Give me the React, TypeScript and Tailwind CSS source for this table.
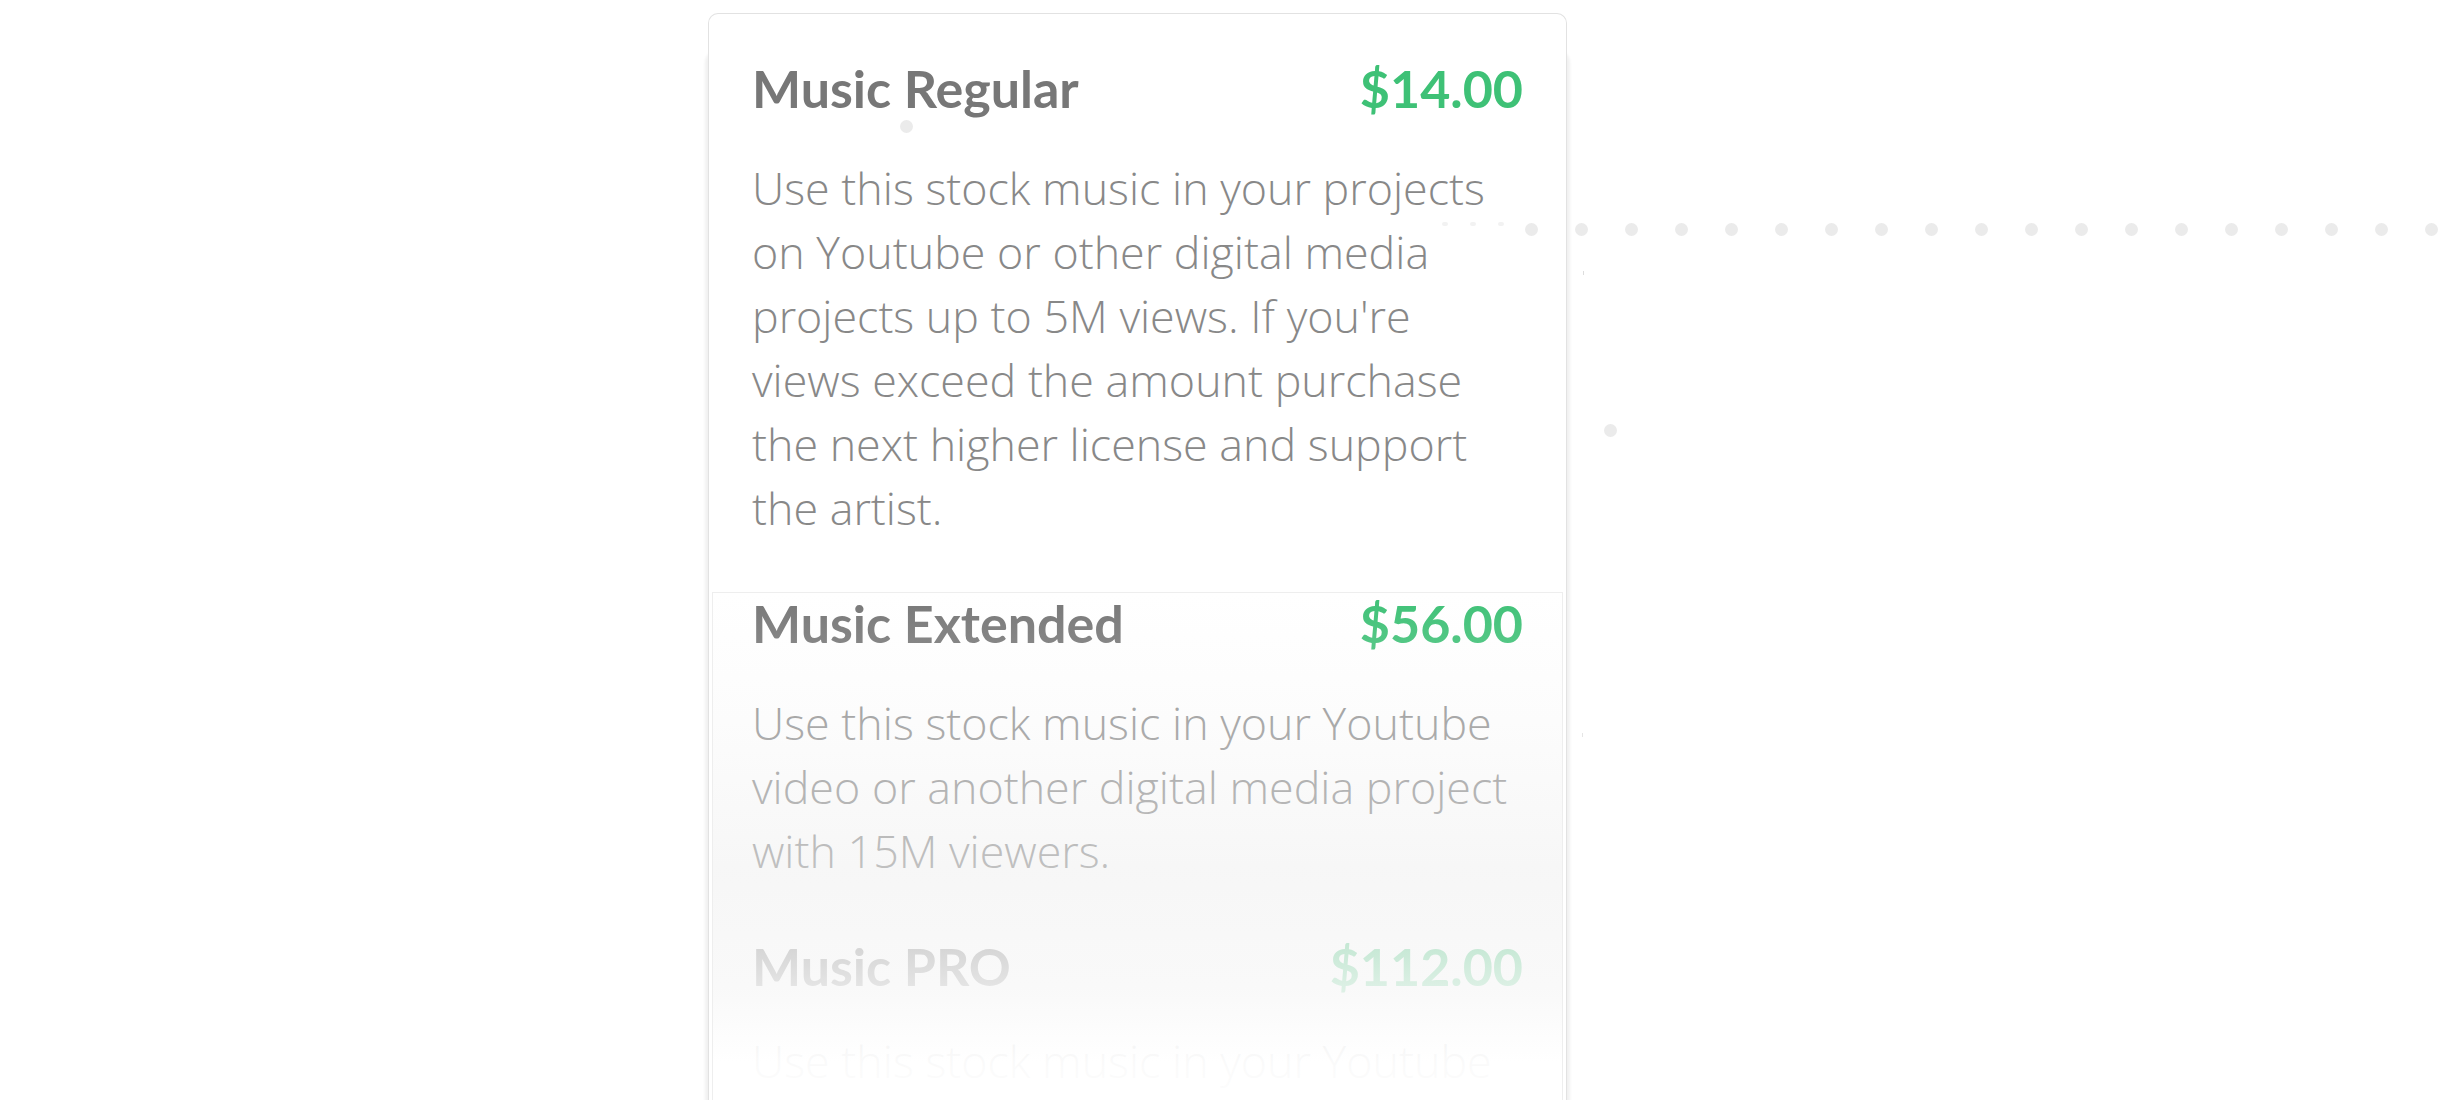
import React from "react";

const headFont = { fontFamily: "Lato, 'Noto Sans', sans-serif" };
const bodyFont = { fontFamily: "'Open Sans', 'Noto Sans', sans-serif" };

function Row({ title, price }: { title: string; price: string }) {
  return (
    <div className="flex items-baseline justify-between" style={headFont}>
      <h3 className="text-[52px] leading-[60px] font-bold text-[#777777]">{title}</h3>
      <span className="text-[52px] leading-[60px] font-bold text-[#3ec176]">{price}</span>
    </div>
  );
}

function Desc({ children, gap }: { children: React.ReactNode; gap: string }) {
  return (
    <p className={`${gap} pr-[9px] text-[44.8px] leading-[64px] font-light text-[#888888]`} style={bodyFont}>
      {children}
    </p>
  );
}

const dot = "h-[13px] w-[13px] rounded-full bg-[#ebebeb]";

export default function App() {
  const rowDots = Array.from({ length: 19 }, (_, i) => i);
  return (
    <div className="relative h-[1100px] w-full overflow-hidden bg-white">
      <div className="relative ml-[708px] mt-[13px] w-[859px] rounded-t-[10px] border border-b-0 border-[#e2e2e2] bg-white shadow-[0_40px_3px_3px_rgba(0,0,0,0.06)]">
        <div className="px-[43px] pt-[44px] pb-[52px]">
          <Row title="Music Regular" price="$14.00" />
          <Desc gap="mt-[38px]">
            Use this stock music in your projects on Youtube or other digital media projects up to 5M views. If you're views exceed the amount purchase the next higher license and support the artist.
          </Desc>
        </div>
        <div className="relative mx-[3px] border border-b-0 border-[#eeeeee] px-[39px] pb-[120px]">
          <Row title="Music Extended" price="$56.00" />
          <Desc gap="mt-[38px]">
            Use this stock music in your Youtube video or another digital media project with 15M viewers.
          </Desc>
          <div className="mt-[53px]">
            <Row title="Music PRO" price="$112.00" />
          </div>
          <Desc gap="mt-[33px]">
            Use this stock music in your Youtube video or another digital media project with unlimited viewers.
          </Desc>
          <div className="pointer-events-none absolute inset-0 bg-[linear-gradient(to_bottom,rgba(250,250,250,0)_0px,rgba(245,245,245,0.3)_128px,rgba(240,240,240,0.55)_280px,rgba(248,248,248,0.85)_395px,rgba(255,255,255,0.96)_470px,rgba(255,255,255,1)_540px)]" />
        </div>
      </div>

      {/* decorative background particles (free canvas) */}
      <div className="pointer-events-none absolute inset-0">
        <div className="absolute left-[1442px] top-[222px] flex gap-[22px]">
          <div className="h-[4px] w-[6px] rounded-full bg-[#f2f2f2]" />
          <div className="h-[4px] w-[6px] rounded-full bg-[#f2f2f2]" />
          <div className="h-[4px] w-[6px] rounded-full bg-[#f2f2f2]" />
        </div>
        <div className="absolute left-[1525px] top-[223px] flex gap-[37px]">
          {rowDots.map((i) => (
            <div key={i} className={dot} />
          ))}
        </div>
        <div className={`absolute left-[900px] top-[120px] ${dot}`} />
        <div className={`absolute left-[1604px] top-[424px] ${dot}`} />
        <div className="absolute left-[1583px] top-[271px] h-[4px] w-[1px] bg-[#dddddd]" />
        <div className="absolute left-[1582px] top-[733px] h-[4px] w-[1px] bg-[#e5e5e5]" />
      </div>
    </div>
  );
}
